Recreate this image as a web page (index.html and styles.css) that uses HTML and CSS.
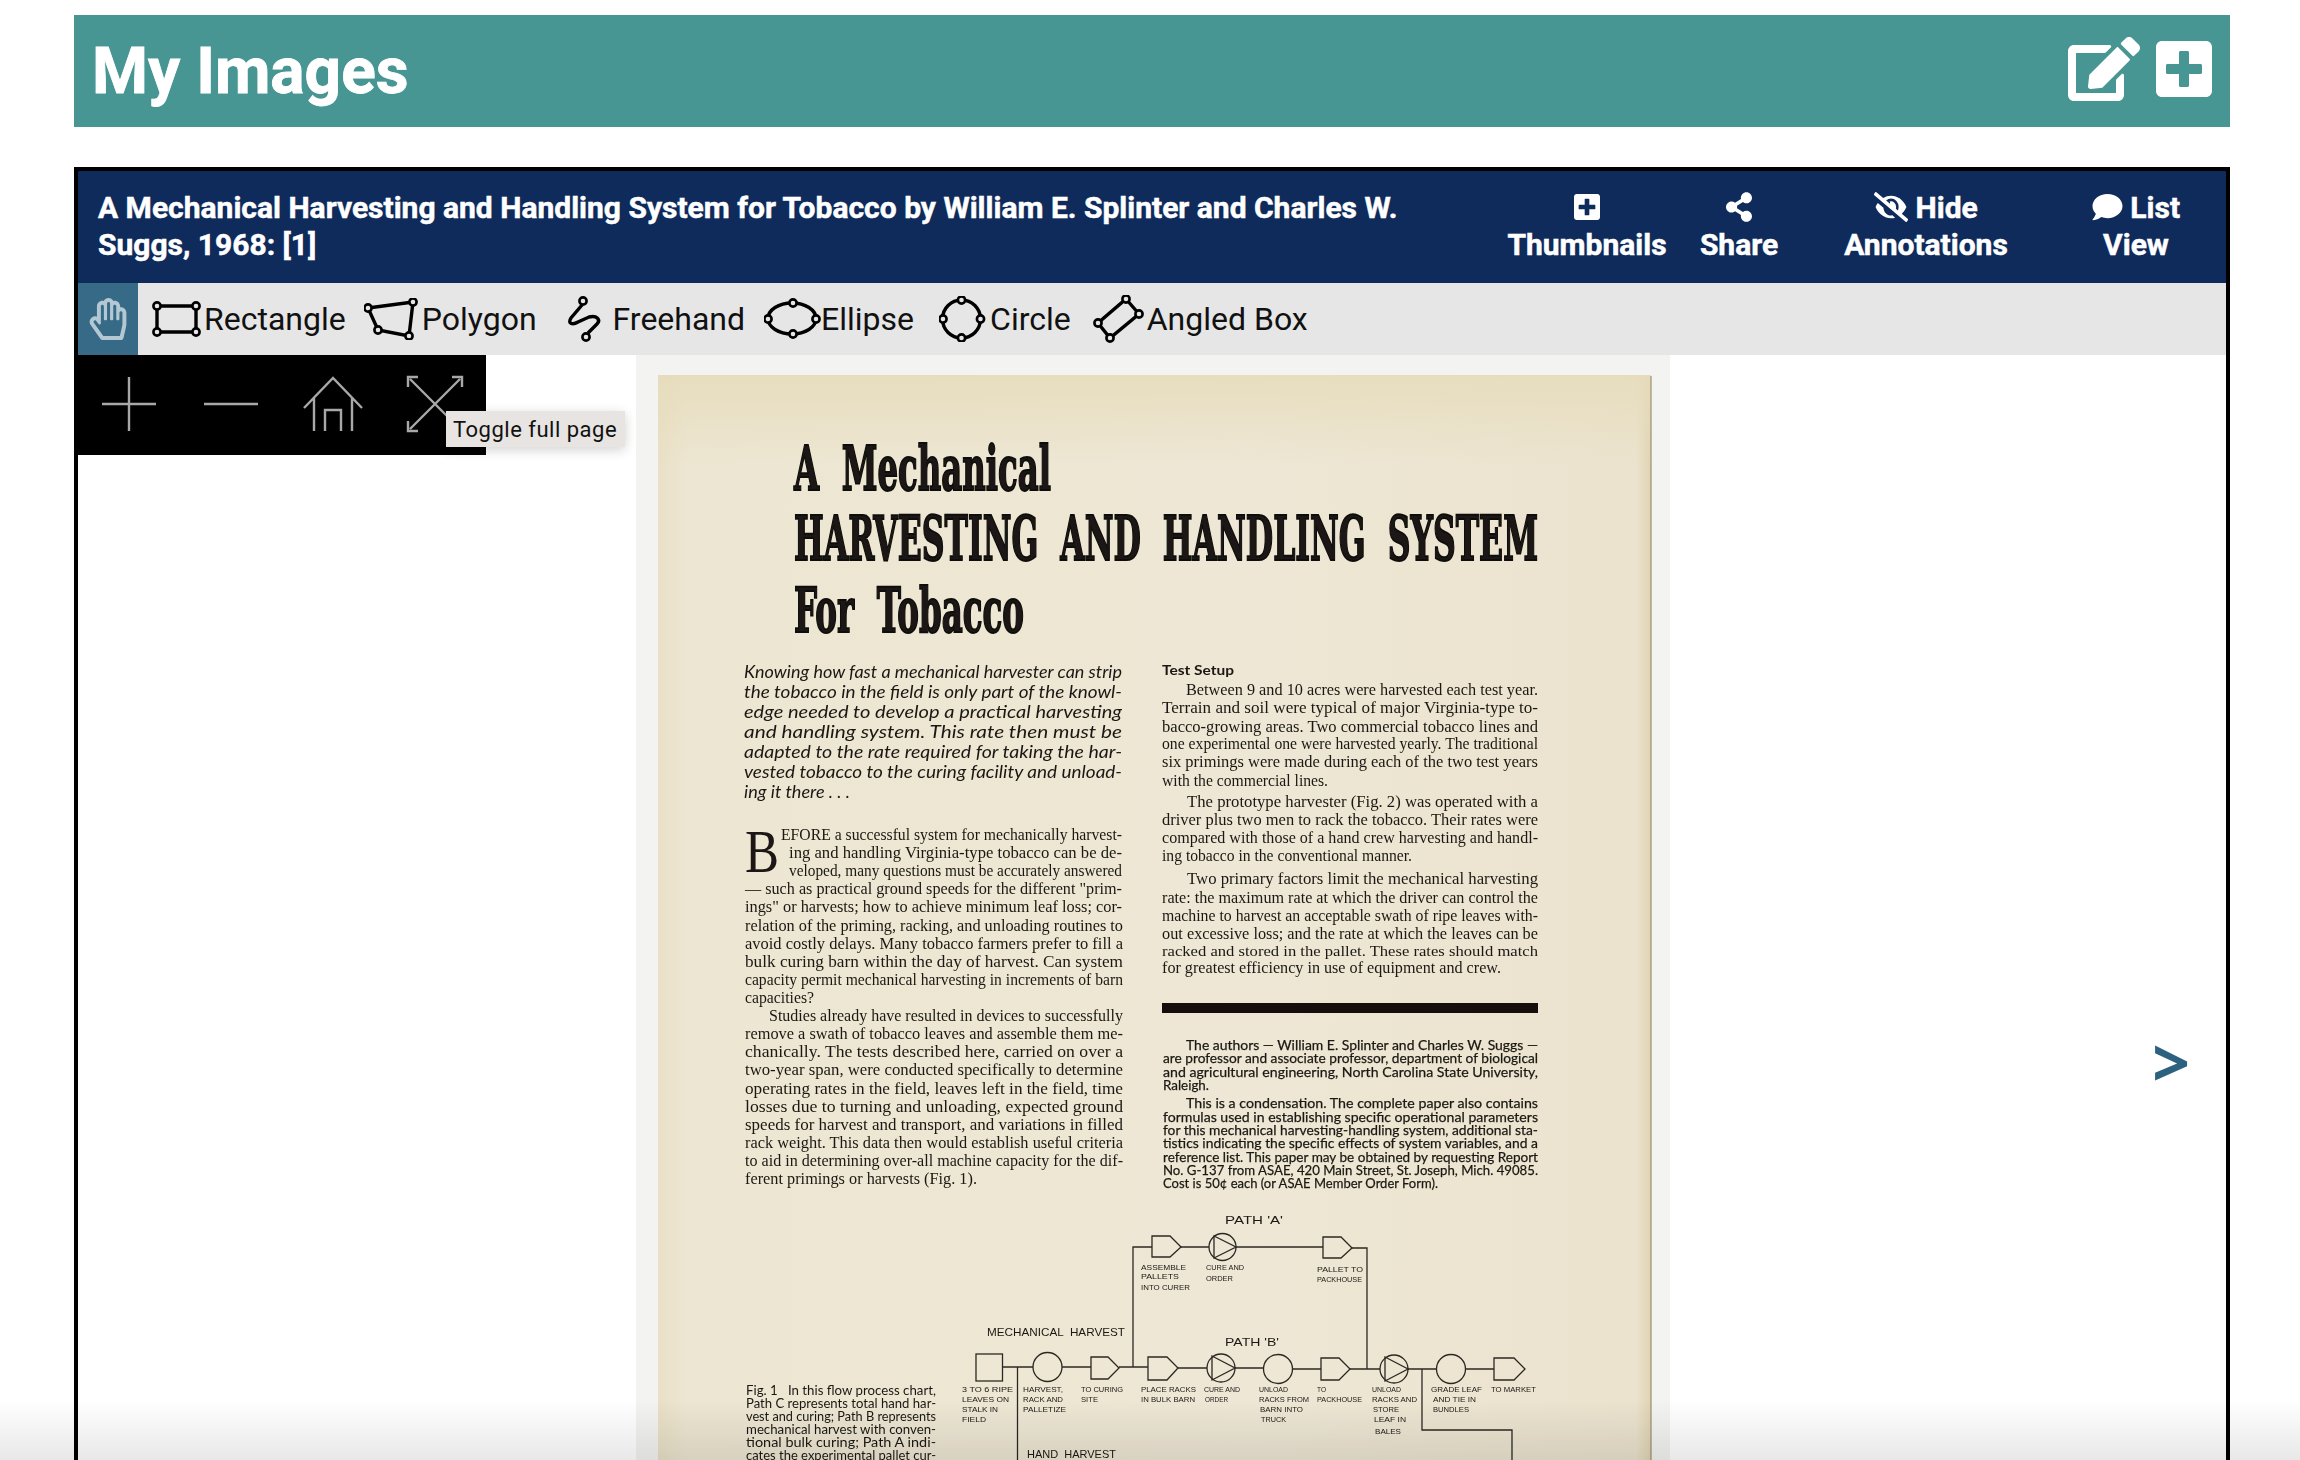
FILE: index.html
```html
<!DOCTYPE html>
<html>

<head>
    <title>My Images</title>
    <link rel="stylesheet" href="styles.css">
</head>

<body>
    <header class="page-bar">
        <h1>My Images</h1>
        <div class="page-actions">
            <svg class="icon-edit" viewBox="0 0 576 512"><path d="M402.6 83.2l90.2 90.2c3.8 3.8 3.8 10 0 13.8L274.4 405.6l-92.8 10.3c-12.4 1.4-22.9-9.1-21.5-21.5l10.3-92.8L388.8 83.2c3.8-3.8 10-3.8 13.8 0zm162-22.9l-48.8-48.8c-15.2-15.2-39.9-15.2-55.2 0l-35.4 35.4c-3.8 3.8-3.8 10 0 13.8l90.2 90.2c3.8 3.8 10 3.8 13.8 0l35.4-35.4c15.2-15.3 15.2-40 0-55.2zM384 346.2V448H64V128h229.8c3.2 0 6.2-1.3 8.5-3.5l40-40c7.6-7.6 2.2-20.5-8.5-20.5H48C21.5 64 0 85.5 0 112v352c0 26.5 21.5 48 48 48h352c26.5 0 48-21.5 48-48V306.2c0-10.7-12.9-16-20.5-8.5l-40 40c-2.2 2.3-3.5 5.3-3.5 8.5z"/></svg>
            <svg class="icon-add" viewBox="0 0 448 512" preserveAspectRatio="none"><path d="M400 32H48C21.5 32 0 53.5 0 80v352c0 26.5 21.5 48 48 48h352c26.5 0 48-21.5 48-48V80c0-26.5-21.5-48-48-48zm-32 252c0 6.6-5.4 12-12 12h-92v92c0 6.6-5.4 12-12 12h-56c-6.6 0-12-5.4-12-12v-92H92c-6.6 0-12-5.4-12-12v-56c0-6.6 5.4-12 12-12h92v-92c0-6.6 5.4-12 12-12h56c6.6 0 12 5.4 12 12v92h92c6.6 0 12 5.4 12 12v56z"/></svg>
        </div>
    </header>

    <section class="viewer">
        <div class="viewer-head">
            <div class="viewer-title">A Mechanical Harvesting and Handling System for Tobacco by William E. Splinter and Charles W. Suggs, 1968: [1]</div>
            <div class="viewer-btn">
                <svg class="icon-sm" viewBox="0 0 448 512"><path d="M400 32H48C21.5 32 0 53.5 0 80v352c0 26.5 21.5 48 48 48h352c26.5 0 48-21.5 48-48V80c0-26.5-21.5-48-48-48zm-32 252c0 6.6-5.4 12-12 12h-92v92c0 6.6-5.4 12-12 12h-56c-6.6 0-12-5.4-12-12v-92H92c-6.6 0-12-5.4-12-12v-56c0-6.6 5.4-12 12-12h92v-92c0-6.6 5.4-12 12-12h56c6.6 0 12 5.4 12 12v92h92c6.6 0 12 5.4 12 12v56z"/></svg><br>Thumbnails
            </div>
            <div class="viewer-btn">
                <svg class="icon-sm" viewBox="0 0 448 512"><path d="M352 320c-22.608 0-43.387 7.819-59.79 20.895l-102.486-64.054a96.551 96.551 0 0 0 0-41.683l102.486-64.054C308.613 184.181 329.392 192 352 192c53.019 0 96-42.981 96-96S405.019 0 352 0s-96 42.981-96 96c0 7.158.79 14.13 2.276 20.841L155.79 180.895C139.387 167.819 118.608 160 96 160c-53.019 0-96 42.981-96 96s42.981 96 96 96c22.608 0 43.387-7.819 59.79-20.895l102.486 64.054A96.301 96.301 0 0 0 256 416c0 53.019 42.981 96 96 96s96-42.981 96-96-42.981-96-96-96z"/></svg><br>Share
            </div>
            <div class="viewer-btn">
                <svg class="icon-sm icon-wide" viewBox="0 0 640 512" preserveAspectRatio="none"><path d="M320 400c-75.85 0-137.25-58.71-142.9-133.11L72.2 185.82c-13.79 17.3-26.48 35.59-36.72 55.59a32.35 32.35 0 0 0 0 29.19C89.71 376.41 197.07 448 320 448c26.91 0 52.87-4 77.89-10.46L346 397.39a144.13 144.13 0 0 1-26 2.61zm313.82 58.1l-110.55-85.44a331.25 331.25 0 0 0 81.25-102.07 32.35 32.35 0 0 0 0-29.19C550.29 135.59 442.93 64 320 64a308.15 308.15 0 0 0-147.32 37.7L45.46 3.37A16 16 0 0 0 23 6.18L3.37 31.45A16 16 0 0 0 6.18 53.9l588.36 454.73a16 16 0 0 0 22.46-2.81l19.64-25.27a16 16 0 0 0-2.82-22.45zm-183.72-142l-39.3-30.38A94.75 94.75 0 0 0 416 256a94.76 94.76 0 0 0-121.31-92.21A47.65 47.65 0 0 1 304 192a46.64 46.64 0 0 1-1.54 10l-73.61-56.89A142.31 142.31 0 0 1 320 112a143.92 143.92 0 0 1 144 144c0 21.63-5.29 41.79-13.9 60.11z"/></svg> Hide<br>Annotations
            </div>
            <div class="viewer-btn">
                <svg class="icon-sm icon-round" viewBox="0 0 512 512"><path d="M256 32C114.6 32 0 125.1 0 240c0 49.6 21.4 95 57 130.7C44.5 421.1 2.7 466 2.2 466.5c-2.2 2.3-2.8 5.7-1.5 8.7S4.8 480 8 480c66.3 0 116-31.8 140.6-51.4 32.7 12.3 69 19.4 107.4 19.4 141.4 0 256-93.1 256-208S397.4 32 256 32z"/></svg> List<br>View
            </div>
        </div>

        <div class="tools">
            <div class="tool-hand">
                <svg viewBox="0 0 448 512"><path d="M372.57 112.641v-10.825c0-43.612-40.52-76.691-83.039-65.546-25.629-49.5-94.09-47.45-117.982.747C130.269 26.456 89.144 57.945 89.144 102v126.13c-19.953-7.427-43.308-5.068-62.083 8.871-29.355 21.796-35.794 63.333-14.55 93.153L132.48 498.569a32 32 0 0 0 26.062 13.432h222.897c14.904 0 27.835-10.289 31.182-24.813l30.184-130.958A203.637 203.637 0 0 0 448 310.564V179c0-40.62-35.523-71.992-75.43-66.359zm27.427 197.922c0 11.731-1.334 23.469-3.965 34.886L368.707 464h-201.92L51.591 302.303c-14.439-20.27 15.023-42.776 29.394-22.605l27.126 38.079c8.995 12.626 29.031 6.287 29.031-9.283V102c0-25.645 36.571-24.81 36.571.691V256c0 8.837 7.163 16 16 16h6.857c8.837 0 16-7.163 16-16V67c0-25.663 36.571-24.81 36.571.691V256c0 8.837 7.163 16 16 16h6.857c8.837 0 16-7.163 16-16V101.125c0-25.672 36.57-24.81 36.57.691V256c0 8.837 7.163 16 16 16h6.857c8.837 0 16-7.163 16-16v-76.309c0-26.242 36.57-25.64 36.57-.691v131.563z"/></svg>
            </div>
            <div class="tool tool-rect">
                <svg width="50" height="36" viewBox="0 0 50 36">
                    <path class="shape" d="M5 5H44V31H5Z"/>
                    <circle class="dot" cx="5" cy="5" r="3.6"/><circle class="dot" cx="44" cy="5" r="3.6"/><circle class="dot" cx="5" cy="31" r="3.6"/><circle class="dot" cx="44" cy="31" r="3.6"/>
                </svg>
                <span>Rectangle</span>
            </div>
            <div class="tool">
                <svg width="55" height="42" viewBox="0 0 55 42">
                    <path class="shape" d="M4 10L49 4L45 38L14 32Z"/>
                    <circle class="dot" cx="4" cy="10" r="3.6"/><circle class="dot" cx="49" cy="4" r="3.6"/><circle class="dot" cx="45" cy="38" r="3.6"/><circle class="dot" cx="14" cy="32" r="3.6"/>
                </svg>
                <span>Polygon</span>
            </div>
            <div class="tool tool-free">
                <svg width="36" height="46" viewBox="0 0 36 46">
                    <path class="shape" d="M15 9L4 22C0 28 6 29 11 26L22 21C30 19 34 24 30 28L21 37"/>
                    <circle class="dot" cx="16" cy="5" r="3.6"/><circle class="dot" cx="19" cy="41" r="3.6"/>
                </svg>
                <span>Freehand</span>
            </div>
            <div class="tool tool-ellipse">
                <svg width="58" height="42" viewBox="0 0 58 42">
                    <ellipse class="shape" cx="28" cy="20.5" rx="24" ry="15.5"/>
                    <circle class="dot" cx="29" cy="5" r="3.6"/><circle class="dot" cx="29" cy="36" r="3.6"/><circle class="dot" cx="4" cy="21" r="3.6"/><circle class="dot" cx="52" cy="21" r="3.6"/>
                </svg>
                <span>Ellipse</span>
            </div>
            <div class="tool tool-circle">
                <svg width="52" height="46" viewBox="0 0 52 46">
                    <circle class="shape" cx="22.5" cy="23" r="19"/>
                    <circle class="dot" cx="22.5" cy="4" r="3.6"/><circle class="dot" cx="22.5" cy="42" r="3.6"/><circle class="dot" cx="4" cy="23" r="3.6"/><circle class="dot" cx="41.5" cy="23" r="3.6"/>
                </svg>
                <span>Circle</span>
            </div>
            <div class="tool tool-angled">
                <svg width="53" height="48" viewBox="0 0 53 48">
                    <path class="shape" d="M33 4L46 19L17 43L5 28Z"/>
                    <circle class="dot" cx="33" cy="4" r="3.6"/><circle class="dot" cx="46" cy="19" r="3.6"/><circle class="dot" cx="17" cy="43" r="3.6"/><circle class="dot" cx="5" cy="28" r="3.6"/>
                </svg>
                <span>Angled Box</span>
            </div>
        </div>

        <div class="stage">
            <svg class="scan" viewBox="636 355 1034 1105">
                <defs>
                    <linearGradient id="paperTone" x1="0" y1="0" x2="1" y2="0">
                        <stop offset="0" stop-color="#e9e0c6"/>
                        <stop offset="0.03" stop-color="#ede6d2"/>
                        <stop offset="0.6" stop-color="#eee7d5"/>
                        <stop offset="0.985" stop-color="#ebe3ce"/>
                        <stop offset="1" stop-color="#e0d3b2"/>
                    </linearGradient>
                    <linearGradient id="paperTop" x1="0" y1="0" x2="0" y2="1">
                        <stop offset="0" stop-color="#e6dcbc" stop-opacity="0.9"/>
                        <stop offset="1" stop-color="#e6dcbc" stop-opacity="0"/>
                    </linearGradient>
                    <filter id="soft"><feGaussianBlur stdDeviation="0.3"/></filter>
                </defs>
                <rect class="paper" x="658" y="375" width="993" height="1085"/>
                <rect class="paper-top" x="658" y="375" width="993" height="90"/>
                <path class="paper-side" d="M1651 376V1460"/>

                <g filter="url(#soft)">
                    <text class="t-head" x="794" y="490" textLength="257" lengthAdjust="spacingAndGlyphs">A  Mechanical</text>
                    <text class="t-head" x="794" y="560" textLength="744" lengthAdjust="spacingAndGlyphs">HARVESTING  AND  HANDLING  SYSTEM</text>
                    <text class="t-head" x="794" y="632" textLength="230" lengthAdjust="spacingAndGlyphs">For  Tobacco</text>

                    <text class="t-intro" x="744" y="678" textLength="378" lengthAdjust="spacingAndGlyphs">Knowing how fast a mechanical harvester can strip</text>
                    <text class="t-intro" x="744" y="698" textLength="378" lengthAdjust="spacingAndGlyphs">the tobacco in the field is only part of the knowl-</text>
                    <text class="t-intro" x="744" y="718" textLength="378" lengthAdjust="spacingAndGlyphs">edge needed to develop a practical harvesting</text>
                    <text class="t-intro" x="744" y="738" textLength="378" lengthAdjust="spacingAndGlyphs">and handling system. This rate then must be</text>
                    <text class="t-intro" x="744" y="758" textLength="378" lengthAdjust="spacingAndGlyphs">adapted to the rate required for taking the har-</text>
                    <text class="t-intro" x="744" y="778" textLength="378" lengthAdjust="spacingAndGlyphs">vested tobacco to the curing facility and unload-</text>
                    <text class="t-intro" x="744" y="798" textLength="106" lengthAdjust="spacingAndGlyphs">ing it there . . .</text>

                    <text class="t-drop" x="745" y="872" textLength="34" lengthAdjust="spacingAndGlyphs">B</text>
                    <text class="t-body" x="781" y="840" textLength="341" lengthAdjust="spacingAndGlyphs">EFORE a successful system for mechanically harvest-</text>
                    <text class="t-body" x="789" y="858" textLength="333" lengthAdjust="spacingAndGlyphs">ing and handling Virginia-type tobacco can be de-</text>
                    <text class="t-body" x="789" y="876" textLength="333" lengthAdjust="spacingAndGlyphs">veloped, many questions must be accurately answered</text>
                    <text class="t-body" x="745" y="894" textLength="377" lengthAdjust="spacingAndGlyphs">— such as practical ground speeds for the different "prim-</text>
                    <text class="t-body" x="745" y="912" textLength="377" lengthAdjust="spacingAndGlyphs">ings" or harvests; how to achieve minimum leaf loss; cor-</text>
                    <text class="t-body" x="745" y="931" textLength="378" lengthAdjust="spacingAndGlyphs">relation of the priming, racking, and unloading routines to</text>
                    <text class="t-body" x="745" y="949" textLength="378" lengthAdjust="spacingAndGlyphs">avoid costly delays. Many tobacco farmers prefer to fill a</text>
                    <text class="t-body" x="745" y="967" textLength="378" lengthAdjust="spacingAndGlyphs">bulk curing barn within the day of harvest. Can system</text>
                    <text class="t-body" x="745" y="985" textLength="378" lengthAdjust="spacingAndGlyphs">capacity permit mechanical harvesting in increments of barn</text>
                    <text class="t-body" x="745" y="1003" textLength="69" lengthAdjust="spacingAndGlyphs">capacities?</text>
                    <text class="t-body" x="769" y="1021" textLength="354" lengthAdjust="spacingAndGlyphs">Studies already have resulted in devices to successfully</text>
                    <text class="t-body" x="745" y="1039" textLength="378" lengthAdjust="spacingAndGlyphs">remove a swath of tobacco leaves and assemble them me-</text>
                    <text class="t-body" x="745" y="1057" textLength="378" lengthAdjust="spacingAndGlyphs">chanically. The tests described here, carried on over a</text>
                    <text class="t-body" x="745" y="1075" textLength="378" lengthAdjust="spacingAndGlyphs">two-year span, were conducted specifically to determine</text>
                    <text class="t-body" x="745" y="1094" textLength="378" lengthAdjust="spacingAndGlyphs">operating rates in the field, leaves left in the field, time</text>
                    <text class="t-body" x="745" y="1112" textLength="378" lengthAdjust="spacingAndGlyphs">losses due to turning and unloading, expected ground</text>
                    <text class="t-body" x="745" y="1130" textLength="378" lengthAdjust="spacingAndGlyphs">speeds for harvest and transport, and variations in filled</text>
                    <text class="t-body" x="745" y="1148" textLength="378" lengthAdjust="spacingAndGlyphs">rack weight. This data then would establish useful criteria</text>
                    <text class="t-body" x="745" y="1166" textLength="378" lengthAdjust="spacingAndGlyphs">to aid in determining over-all machine capacity for the dif-</text>
                    <text class="t-body" x="745" y="1184" textLength="232" lengthAdjust="spacingAndGlyphs">ferent primings or harvests (Fig. 1).</text>

                    <text class="t-sub" x="1162" y="675" textLength="72" lengthAdjust="spacingAndGlyphs">Test Setup</text>
                    <text class="t-body" x="1186" y="695" textLength="352" lengthAdjust="spacingAndGlyphs">Between 9 and 10 acres were harvested each test year.</text>
                    <text class="t-body" x="1162" y="713" textLength="376" lengthAdjust="spacingAndGlyphs">Terrain and soil were typical of major Virginia-type to-</text>
                    <text class="t-body" x="1162" y="732" textLength="376" lengthAdjust="spacingAndGlyphs">bacco-growing areas. Two commercial tobacco lines and</text>
                    <text class="t-body" x="1162" y="749" textLength="376" lengthAdjust="spacingAndGlyphs">one experimental one were harvested yearly. The traditional</text>
                    <text class="t-body" x="1162" y="767" textLength="376" lengthAdjust="spacingAndGlyphs">six primings were made during each of the two test years</text>
                    <text class="t-body" x="1162" y="786" textLength="166" lengthAdjust="spacingAndGlyphs">with the commercial lines.</text>
                    <text class="t-body" x="1187" y="807" textLength="351" lengthAdjust="spacingAndGlyphs">The prototype harvester (Fig. 2) was operated with a</text>
                    <text class="t-body" x="1162" y="825" textLength="376" lengthAdjust="spacingAndGlyphs">driver plus two men to rack the tobacco. Their rates were</text>
                    <text class="t-body" x="1162" y="843" textLength="376" lengthAdjust="spacingAndGlyphs">compared with those of a hand crew harvesting and handl-</text>
                    <text class="t-body" x="1162" y="861" textLength="250" lengthAdjust="spacingAndGlyphs">ing tobacco in the conventional manner.</text>
                    <text class="t-body" x="1187" y="884" textLength="351" lengthAdjust="spacingAndGlyphs">Two primary factors limit the mechanical harvesting</text>
                    <text class="t-body" x="1162" y="903" textLength="376" lengthAdjust="spacingAndGlyphs">rate: the maximum rate at which the driver can control the</text>
                    <text class="t-body" x="1162" y="921" textLength="376" lengthAdjust="spacingAndGlyphs">machine to harvest an acceptable swath of ripe leaves with-</text>
                    <text class="t-body" x="1162" y="939" textLength="376" lengthAdjust="spacingAndGlyphs">out excessive loss; and the rate at which the leaves can be</text>
                    <text class="t-body t-small" x="1162" y="956" textLength="376" lengthAdjust="spacingAndGlyphs">racked and stored in the pallet. These rates should match</text>
                    <text class="t-body" x="1162" y="973" textLength="339" lengthAdjust="spacingAndGlyphs">for greatest efficiency in use of equipment and crew.</text>

                    <rect class="ink" x="1162" y="1003" width="376" height="10"/>

                    <text class="t-note" x="1186" y="1050" textLength="352" lengthAdjust="spacingAndGlyphs">The authors — William E. Splinter and Charles W. Suggs —</text>
                    <text class="t-note" x="1163" y="1063" textLength="375" lengthAdjust="spacingAndGlyphs">are professor and associate professor, department of biological</text>
                    <text class="t-note" x="1163" y="1077" textLength="375" lengthAdjust="spacingAndGlyphs">and agricultural engineering, North Carolina State University,</text>
                    <text class="t-note" x="1163" y="1090" textLength="46" lengthAdjust="spacingAndGlyphs">Raleigh.</text>
                    <text class="t-note" x="1186" y="1108" textLength="352" lengthAdjust="spacingAndGlyphs">This is a condensation. The complete paper also contains</text>
                    <text class="t-note" x="1163" y="1122" textLength="375" lengthAdjust="spacingAndGlyphs">formulas used in establishing specific operational parameters</text>
                    <text class="t-note" x="1163" y="1135" textLength="375" lengthAdjust="spacingAndGlyphs">for this mechanical harvesting-handling system, additional sta-</text>
                    <text class="t-note" x="1163" y="1148" textLength="375" lengthAdjust="spacingAndGlyphs">tistics indicating the specific effects of system variables, and a</text>
                    <text class="t-note" x="1163" y="1162" textLength="375" lengthAdjust="spacingAndGlyphs">reference list. This paper may be obtained by requesting Report</text>
                    <text class="t-note" x="1163" y="1175" textLength="375" lengthAdjust="spacingAndGlyphs">No. G-137 from ASAE, 420 Main Street, St. Joseph, Mich. 49085.</text>
                    <text class="t-note" x="1163" y="1188" textLength="275" lengthAdjust="spacingAndGlyphs">Cost is 50¢ each (or ASAE Member Order Form).</text>

                    <!-- flow chart -->
                    <g class="flow">
                        <path d="M1133 1367V1247H1152M1181 1247H1209M1236 1247H1323M1352 1248H1367V1369"/>
                        <path d="M1002 1367H1033M1062 1367H1091M1119 1367H1148M1178 1368H1207M1235 1368H1264M1292 1369H1321M1350 1369H1380M1408 1369H1437M1466 1369H1494"/>
                        <path d="M1017.5 1367V1460M1422 1369V1430H1512V1460"/>
                        <rect x="976" y="1354" width="26.5" height="27"/>
                        <circle cx="1047.5" cy="1367" r="14.5"/>
                        <circle cx="1278" cy="1369" r="14.5"/>
                        <circle cx="1451" cy="1369" r="14.5"/>
                        <path d="M1152 1236H1170L1181 1247L1170 1257H1152Z"/>
                        <path d="M1323 1237H1341L1352 1248L1341 1258H1323Z"/>
                        <path d="M1091 1357H1108L1119 1368L1108 1379H1091Z"/>
                        <path d="M1148 1357H1167L1178 1368L1167 1380H1148Z"/>
                        <path d="M1321 1358H1339L1350 1369L1339 1380H1321Z"/>
                        <path d="M1494 1358H1514L1525 1369L1514 1380H1494Z"/>
                        <circle cx="1222.5" cy="1247" r="13.5"/>
                        <path d="M1214 1236V1258L1236 1247Z"/>
                        <circle cx="1221" cy="1368" r="14"/>
                        <path d="M1212 1356V1380L1235 1368Z"/>
                        <circle cx="1394" cy="1369" r="14"/>
                        <path d="M1385 1357V1381L1408 1369Z"/>
                    </g>
                    <text class="t-flow-lg" x="1225" y="1224" textLength="58" lengthAdjust="spacingAndGlyphs">PATH 'A'</text>
                    <text class="t-flow-lg" x="1225" y="1346" textLength="54" lengthAdjust="spacingAndGlyphs">PATH 'B'</text>
                    <text class="t-flow-lg" x="987" y="1336" textLength="138" lengthAdjust="spacingAndGlyphs">MECHANICAL  HARVEST</text>
                    <text class="t-flow-lg" x="1027" y="1458" textLength="89" lengthAdjust="spacingAndGlyphs">HAND  HARVEST</text>

                    <text class="t-flow" x="1141" y="1270" textLength="45" lengthAdjust="spacingAndGlyphs">ASSEMBLE</text>
                    <text class="t-flow" x="1141" y="1279" textLength="38" lengthAdjust="spacingAndGlyphs">PALLETS</text>
                    <text class="t-flow" x="1141" y="1290" textLength="49" lengthAdjust="spacingAndGlyphs">INTO CURER</text>
                    <text class="t-flow" x="1206" y="1270" textLength="38" lengthAdjust="spacingAndGlyphs">CURE AND</text>
                    <text class="t-flow" x="1206" y="1281" textLength="27" lengthAdjust="spacingAndGlyphs">ORDER</text>
                    <text class="t-flow" x="1317" y="1272" textLength="46" lengthAdjust="spacingAndGlyphs">PALLET TO</text>
                    <text class="t-flow" x="1317" y="1282" textLength="45" lengthAdjust="spacingAndGlyphs">PACKHOUSE</text>

                    <text class="t-flow" x="962" y="1392" textLength="51" lengthAdjust="spacingAndGlyphs">3 TO 6 RIPE</text>
                    <text class="t-flow" x="962" y="1402" textLength="47" lengthAdjust="spacingAndGlyphs">LEAVES ON</text>
                    <text class="t-flow" x="962" y="1412" textLength="36" lengthAdjust="spacingAndGlyphs">STALK IN</text>
                    <text class="t-flow" x="962" y="1422" textLength="24" lengthAdjust="spacingAndGlyphs">FIELD</text>
                    <text class="t-flow" x="1023" y="1392" textLength="40" lengthAdjust="spacingAndGlyphs">HARVEST,</text>
                    <text class="t-flow" x="1023" y="1402" textLength="40" lengthAdjust="spacingAndGlyphs">RACK AND</text>
                    <text class="t-flow" x="1023" y="1412" textLength="43" lengthAdjust="spacingAndGlyphs">PALLETIZE</text>
                    <text class="t-flow" x="1081" y="1392" textLength="42" lengthAdjust="spacingAndGlyphs">TO CURING</text>
                    <text class="t-flow" x="1081" y="1402" textLength="17" lengthAdjust="spacingAndGlyphs">SITE</text>
                    <text class="t-flow" x="1141" y="1392" textLength="55" lengthAdjust="spacingAndGlyphs">PLACE RACKS</text>
                    <text class="t-flow" x="1141" y="1402" textLength="54" lengthAdjust="spacingAndGlyphs">IN BULK BARN</text>
                    <text class="t-flow" x="1204" y="1392" textLength="36" lengthAdjust="spacingAndGlyphs">CURE AND</text>
                    <text class="t-flow" x="1205" y="1402" textLength="23" lengthAdjust="spacingAndGlyphs">ORDER</text>
                    <text class="t-flow" x="1259" y="1392" textLength="29" lengthAdjust="spacingAndGlyphs">UNLOAD</text>
                    <text class="t-flow" x="1259" y="1402" textLength="50" lengthAdjust="spacingAndGlyphs">RACKS FROM</text>
                    <text class="t-flow" x="1260" y="1412" textLength="43" lengthAdjust="spacingAndGlyphs">BARN INTO</text>
                    <text class="t-flow" x="1261" y="1422" textLength="25" lengthAdjust="spacingAndGlyphs">TRUCK</text>
                    <text class="t-flow" x="1317" y="1392" textLength="9" lengthAdjust="spacingAndGlyphs">TO</text>
                    <text class="t-flow" x="1317" y="1402" textLength="45" lengthAdjust="spacingAndGlyphs">PACKHOUSE</text>
                    <text class="t-flow" x="1372" y="1392" textLength="29" lengthAdjust="spacingAndGlyphs">UNLOAD</text>
                    <text class="t-flow" x="1372" y="1402" textLength="45" lengthAdjust="spacingAndGlyphs">RACKS AND</text>
                    <text class="t-flow" x="1373" y="1412" textLength="26" lengthAdjust="spacingAndGlyphs">STORE</text>
                    <text class="t-flow" x="1374" y="1422" textLength="32" lengthAdjust="spacingAndGlyphs">LEAF IN</text>
                    <text class="t-flow" x="1375" y="1434" textLength="26" lengthAdjust="spacingAndGlyphs">BALES</text>
                    <text class="t-flow" x="1431" y="1392" textLength="51" lengthAdjust="spacingAndGlyphs">GRADE LEAF</text>
                    <text class="t-flow" x="1433" y="1402" textLength="43" lengthAdjust="spacingAndGlyphs">AND TIE IN</text>
                    <text class="t-flow" x="1433" y="1412" textLength="36" lengthAdjust="spacingAndGlyphs">BUNDLES</text>
                    <text class="t-flow" x="1491" y="1392" textLength="45" lengthAdjust="spacingAndGlyphs">TO MARKET</text>

                    <text class="t-cap" x="746" y="1395" textLength="190" lengthAdjust="spacingAndGlyphs">Fig. 1   In this flow process chart,</text>
                    <text class="t-cap" x="746" y="1408" textLength="190" lengthAdjust="spacingAndGlyphs">Path C represents total hand har-</text>
                    <text class="t-cap" x="746" y="1421" textLength="190" lengthAdjust="spacingAndGlyphs">vest and curing; Path B represents</text>
                    <text class="t-cap" x="746" y="1434" textLength="190" lengthAdjust="spacingAndGlyphs">mechanical harvest with conven-</text>
                    <text class="t-cap" x="746" y="1447" textLength="190" lengthAdjust="spacingAndGlyphs">tional bulk curing; Path A indi-</text>
                    <text class="t-cap" x="746" y="1460" textLength="190" lengthAdjust="spacingAndGlyphs">cates the experimental pallet cur-</text>
                </g>
            </svg>

            <div class="zoom-nav">
                <svg width="408" height="100" viewBox="78 355 408 100">
                    <path d="M102 404H156M129 377V431"/>
                    <path d="M204 404H258"/>
                    <path d="M304 408L333 378L362 408M314 397V431M352 397V431M325 431V410H341V431"/>
                    <path d="M418 377H408V387M452 377H462V387M418 431H408V421M452 431H462V421M410 379L460 429M460 379L410 429"/>
                </svg>
            </div>
            <div class="tooltip">Toggle full page</div>
            <div class="next-arrow">&gt;</div>
        </div>
    </section>

    <div class="bottom-fade"></div>
</body>

</html>
```

FILE: styles.css
```css
html,
body {
    height: 100%;
    margin: 0;
}

body {
    box-sizing: border-box;
    display: flex;
    flex-direction: column;
    padding: 15px 70px 0 74px;
    background-color: #fff;
    font-family: Roboto, "Liberation Sans", sans-serif;
    overflow: hidden;
}

.page-bar {
    display: flex;
    flex: none;
    align-items: center;
    justify-content: space-between;
    height: 112px;
    padding: 0 18px 0 18px;
    background-color: #489693;
}

.page-bar h1 {
    margin: 0;
    color: #fff;
    font-size: 64px;
    font-weight: 700;
    -webkit-text-stroke: 0.8px #fff;
}

.page-actions {
    display: flex;
    align-items: center;
    gap: 16px;
    padding-bottom: 4px;
    fill: #fff;
}

.icon-edit {
    width: 72px;
    height: 64px;
}

.icon-add {
    width: 56px;
    height: 64px;
}

.viewer {
    display: flex;
    flex: 1;
    flex-direction: column;
    min-height: 0;
    margin-top: 40px;
    border: 4px solid #000;
    border-bottom: none;
}

.viewer-head {
    display: grid;
    flex: none;
    grid-template-columns: 1424px 170px 134px 240px 180px;
    align-items: center;
    height: 112px;
    background-color: #0f2b5b;
    color: #fff;
    font-size: 30px;
    font-weight: 700;
    line-height: 36.6px;
    -webkit-text-stroke: 0.5px #fff;
}

.viewer-title {
    padding: 0 100px 0 20px;
}

.viewer-btn {
    fill: #fff;
    text-align: center;
}

.icon-sm {
    width: 26px;
    height: 30px;
    vertical-align: -4px;
}

.icon-wide {
    width: 34px;
}

.icon-round {
    width: 31px;
}

.tools {
    display: flex;
    flex: none;
    align-items: center;
    gap: 18px;
    height: 72px;
    background-color: #e6e6e6;
    color: #111;
    font-size: 32px;
}

.tool-hand {
    display: flex;
    align-items: center;
    justify-content: center;
    width: 60px;
    height: 100%;
    margin-right: -4px;
    background-color: #366a87;
    fill: #b4c8d3;
}

.tool-hand svg {
    width: 38px;
    height: 42px;
}

.tool {
    display: flex;
    align-items: center;
    gap: 3px;
}

.tool-rect span {
    margin-left: -1px;
}

.tool-free {
    margin-left: 12px;
}

.tool-free span {
    margin-left: 7px;
}

.tool-ellipse {
    margin-left: 1px;
}

.tool-ellipse span {
    margin-left: -4px;
}

.tool-circle {
    margin-left: 7px;
}

.tool-circle span {
    margin-left: -4px;
}

.tool-angled {
    margin-left: 4px;
}

.tool-angled span {
    margin-left: -2px;
}

.shape {
    fill: none;
    stroke: #000;
    stroke-width: 3.4;
}

.dot {
    fill: #e6e6e6;
    stroke: #000;
    stroke-width: 2.6;
}

.stage {
    display: flex;
    position: relative;
    flex: 1;
    justify-content: center;
    min-height: 0;
    overflow: hidden;
}

.scan {
    flex: none;
    width: 1034px;
    height: 1105px;
    margin-left: 2px;
    background-color: #f3f3f1;
}

.paper {
    fill: url(#paperTone);
}

.paper-top {
    fill: url(#paperTop);
}

.paper-side {
    stroke: #8b7f5f;
    stroke-width: 1;
}

.ink {
    fill: #14110d;
}

.scan text {
    fill: #1b1813;
}

.t-head {
    font-family: "DejaVu Serif", serif;
    font-size: 61px;
    font-weight: 700;
    white-space: pre;
    stroke: #100e0a;
    stroke-width: 2;
}

.t-intro {
    font-family: Lato, sans-serif;
    font-size: 17px;
    font-style: italic;
}

.t-sub {
    font-family: Lato, sans-serif;
    font-size: 14px;
    font-weight: 700;
}

.t-body {
    font-family: "Liberation Serif", serif;
    font-size: 17.5px;
}

.t-small {
    font-size: 15.5px;
}

.t-drop {
    font-family: "Liberation Serif", serif;
    font-size: 62px;
}

.t-note {
    font-family: Lato, sans-serif;
    font-size: 14px;
    stroke: #1b1813;
    stroke-width: 0.25;
}

.t-cap {
    font-family: Lato, sans-serif;
    font-size: 13.5px;
    white-space: pre;
}

.t-flow {
    font-family: "Liberation Sans", sans-serif;
    font-size: 8px;
}

.t-flow-lg {
    font-family: "Liberation Sans", sans-serif;
    font-size: 11px;
    white-space: pre;
}

.flow {
    fill: none;
    stroke: #2b2822;
    stroke-width: 1.3;
}

.zoom-nav {
    position: absolute;
    top: 0;
    left: 0;
    height: 100px;
    background-color: #000;
    fill: none;
    stroke: #a8a8a8;
    stroke-width: 2.4;
}

.zoom-nav svg {
    display: block;
}

.tooltip {
    position: absolute;
    top: 56px;
    left: 368px;
    box-sizing: border-box;
    width: 179px;
    height: 36px;
    padding-left: 7px;
    background-color: #e8e4e1;
    box-shadow: 0 3px 12px rgba(0, 0, 0, 0.18);
    color: #111;
    font-size: 22px;
    letter-spacing: 0.5px;
    line-height: 38px;
}

.next-arrow {
    position: absolute;
    top: 671px;
    right: 36px;
    color: #2d6180;
    font-family: "Open Sans", sans-serif;
    font-size: 66px;
    font-weight: 700;
    line-height: 70px;
}

.bottom-fade {
    position: fixed;
    right: 0;
    bottom: 0;
    left: 0;
    height: 60px;
    background: linear-gradient(rgba(0, 0, 0, 0), rgba(0, 0, 0, 0.09));
}
```
